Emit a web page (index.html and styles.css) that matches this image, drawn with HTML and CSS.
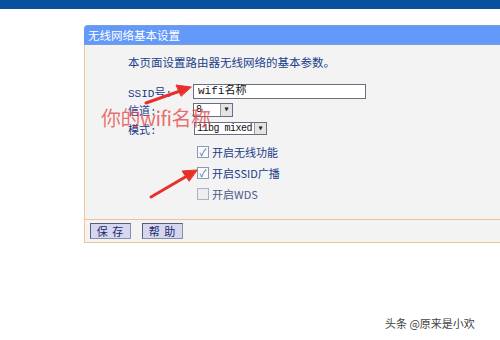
FILE: index.html
```html
<!DOCTYPE html>
<html lang="zh-CN">
<head>
    <meta charset="UTF-8">
    <title>无线网络基本设置</title>
    <link rel="stylesheet" href="styles.css">
</head>
<body>
    <div class="topbar"></div>
    <div class="page">
        <div class="panel">
            <div class="panel-title">无线网络基本设置</div>
            <div class="panel-body">
                <div class="intro">本页面设置路由器无线网络的基本参数。</div>
                <div class="row row-ssid">
                    <span class="label">SSID号:</span>
                    <div class="textbox">wifi名称</div>
                </div>
                <div class="row row-channel">
                    <span class="label">信道:</span>
                    <div class="select sel-channel"><span class="val">8</span><span class="drop">▾</span></div>
                </div>
                <div class="row row-mode">
                    <span class="label">模式:</span>
                    <div class="select sel-mode"><span class="val">11bg mixed</span><span class="drop">▾</span></div>
                </div>
                <div class="checks">
                    <div class="check"><span class="box on">✓</span>开启无线功能</div>
                    <div class="check"><span class="box on">✓</span>开启SSID广播</div>
                    <div class="check off"><span class="box"></span>开启WDS</div>
                </div>
            </div>
            <div class="panel-foot">
                <button class="btn">保 存</button>
                <button class="btn">帮 助</button>
            </div>
        </div>
    </div>

    <!-- annotations drawn over the screenshot -->
    <div class="note">你的wifi名称</div>
    <svg class="arrows" width="500" height="340" viewBox="0 0 500 340">
        <g stroke="#e8302a" stroke-width="3" stroke-linecap="round" fill="#e8302a">
            <line x1="146" y1="103" x2="180" y2="91"/>
            <polygon points="191,87 176,85 181,96" stroke-width="1"/>
            <line x1="151" y1="197" x2="187" y2="176"/>
            <polygon points="197,170 182,171 189,181" stroke-width="1"/>
        </g>
    </svg>
    <div class="watermark">头条 @原来是小欢</div>
</body>
</html>
```

FILE: styles.css
```css
body {
    margin: 0;
    width: 500px;
    height: 340px;
    overflow: hidden;
    background: #fff;
    font-family: "Noto Sans CJK SC", sans-serif;
    font-size: 12px;
    color: #1a3a8a;
    position: relative;
}
.topbar {
    height: 9px;
    background: #0751a0;
}
.page {
    padding: 16px 0 0 84px;
}
.panel {
    width: 440px;
}
.panel-title {
    height: 18px;
    line-height: 18px;
    background: #6399f9;
    border-top: 1px solid #7d9fd6;
    border-bottom: 1px solid #7d9fd6;
    border-top-left-radius: 4px;
    color: #fff;
    padding-left: 4px;
    font-size: 11.5px;
}
.panel-body {
    height: 174px;
    background: #f3f3f3;
    border-left: 1px solid #f3c99c;
    padding-left: 43px;
    box-sizing: border-box;
    padding-top: 9px;
}
.intro {
    height: 16px;
    line-height: 16px;
    font-size: 11.5px;
    color: #20408a;
}
.row {
    display: flex;
    align-items: center;
}
.label {
    width: 65px;
    font-family: "Liberation Mono", "Noto Sans CJK SC", monospace;
    font-size: 11px;
    color: #1a3a8a;
}
.row-ssid {
    margin-top: 14px;
    height: 15px;
}
.row-channel {
    margin-top: 4px;
    height: 14px;
}
.row-mode {
    margin-top: 5px;
    height: 13px;
}
.textbox {
    width: 173px;
    height: 15px;
    box-sizing: border-box;
    background: #fff;
    border: 1px solid #6a6f80;
    padding-left: 4px;
    font-family: "Liberation Mono", "Noto Sans CJK SC", monospace;
    font-size: 11px;
    line-height: 13px;
    color: #111;
}
.select {
    display: flex;
    align-items: stretch;
    box-sizing: border-box;
    background: #fff;
    border: 1px solid #6a6f80;
    font-family: "Liberation Mono", "Noto Sans CJK SC", monospace;
    font-size: 10px;
    color: #111;
    white-space: nowrap;
    overflow: hidden;
}
.sel-channel {
    width: 40px;
    height: 14px;
}
.sel-mode {
    width: 73px;
    height: 13px;
    margin-left: 1px;
}
.sel-mode .val {
    letter-spacing: -0.5px;
}
.select .val {
    flex: 1;
    padding-left: 2px;
    line-height: 12px;
}
.select .drop {
    flex: 0 0 11px;
    background: #e4e4e4;
    border-left: 1px solid #9a9a9a;
    font-size: 10px;
    line-height: 11px;
    text-align: center;
    color: #222;
}
.checks {
    margin-top: 6px;
    padding-left: 69px;
}
.check {
    display: flex;
    align-items: center;
    height: 21px;
    font-size: 11px;
    color: #1a3a8a;
}
.check.off {
    color: #4a5a8a;
}
.box {
    width: 10px;
    height: 10px;
    border: 1px solid #8a98b8;
    background: #fafafa;
    margin-right: 3px;
    font-size: 10px;
    line-height: 10px;
    text-align: center;
    color: #3a5aa8;
}
.check.off .box {
    border-color: #aab2c4;
    background: #eee;
}
.panel-foot {
    height: 22px;
    background: #f3f3f3;
    border-top: 1px solid #f0c28f;
    border-bottom: 1px solid #f0c28f;
    border-left: 1px solid #f3c99c;
    display: flex;
    align-items: center;
    gap: 11px;
    padding-left: 5px;
}
.btn {
    width: 41px;
    height: 16px;
    padding: 0;
    background: #d6d6f0;
    border: 1px solid #5a5f78;
    border-right-color: #8a8fa8;
    border-bottom-color: #8a8fa8;
    font-family: "Noto Sans CJK SC", sans-serif;
    font-size: 11px;
    line-height: 14px;
    letter-spacing: 1px;
    color: #1a2a6a;
}
.note {
    position: absolute;
    left: 101px;
    top: 106px;
    font-family: "Noto Sans CJK SC", sans-serif;
    font-size: 20px;
    line-height: 24px;
    color: rgba(230, 60, 60, 0.72);
    letter-spacing: -0.5px;
}
.arrows {
    position: absolute;
    left: 0;
    top: 0;
}
.watermark {
    position: absolute;
    left: 385px;
    top: 315px;
    font-size: 11px;
    color: #444;
    text-shadow: 0 0 2px #fff, 0 0 2px #fff;
}
```
